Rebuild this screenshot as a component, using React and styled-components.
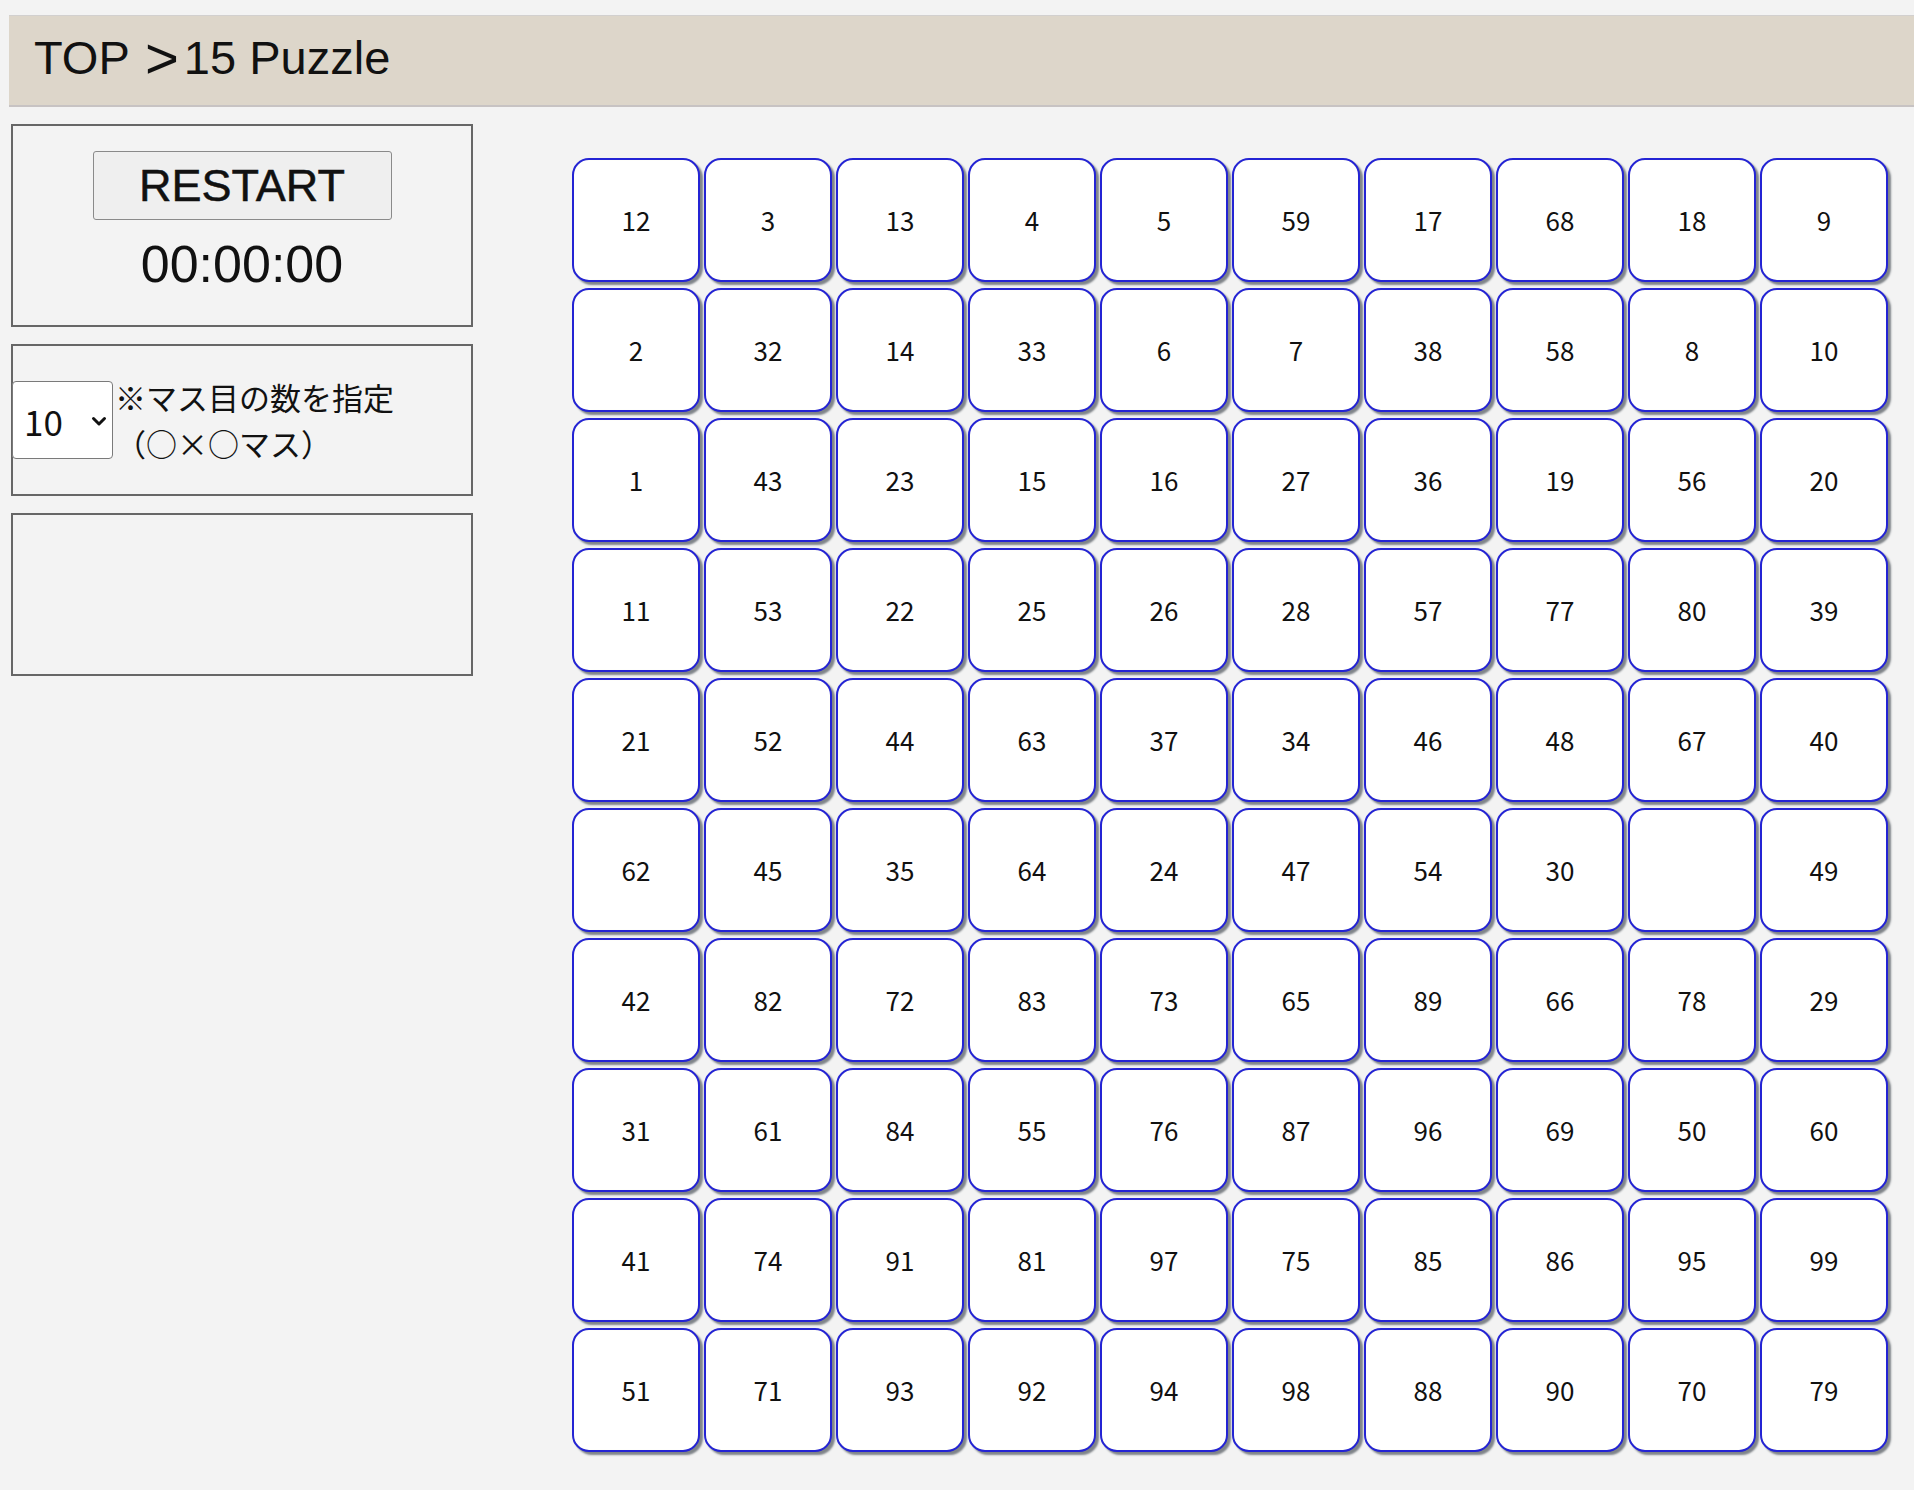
import React from "react";
import styled, { createGlobalStyle } from "styled-components";

const GlobalStyle = createGlobalStyle`
  html, body { margin: 0; padding: 0; background: #f3f3f3; }
  body { font-family: "Liberation Sans", Arial, sans-serif; color: #111; }
`;

const Page = styled.div`
  padding: 15px 0 30px 9px;
  min-height: 1490px;
  box-sizing: border-box;
`;

const Header = styled.header`
  height: 92px;
  box-sizing: border-box;
  background: #ddd6ca;
  border-top: 1px solid #d2d0cf;
  border-bottom: 2px solid #c7c3c3;
  display: flex;
  align-items: center;
  padding: 0 0 6px 25px;
  font-family: "Liberation Sans", Arial, sans-serif;
  font-size: 47px;
  color: #111;
  white-space: pre;
`;

const Arrow = styled.span`
  font-size: 58px;
  line-height: 1;
  vertical-align: -4px;
  margin: 0 5px 0 3px;
`;

const Main = styled.div`
  display: flex;
  align-items: flex-start;
  margin-top: 17px;
  margin-left: 2px;
`;

const Side = styled.div`
  width: 462px;
  display: flex;
  flex-direction: column;
  gap: 17px;
`;

const Box = styled.div`
  box-sizing: border-box;
  border: 2px solid #666;
  height: ${(p) => p.$h}px;
`;

const TimerBox = styled(Box)`
  display: flex;
  flex-direction: column;
  align-items: center;
  padding-top: 25px;
`;

const RestartButton = styled.button`
  width: 299px;
  height: 69px;
  box-sizing: border-box;
  background: #efefef;
  border: 1px solid #8a8a8a;
  border-radius: 3px;
  font-family: "Liberation Sans", Arial, sans-serif;
  font-size: 45px;
  color: #111;
  padding: 0;
  line-height: 1;
  -webkit-text-stroke: 0.5px #111;
`;

const Timer = styled.div`
  margin-top: 14px;
  font-family: "Liberation Sans", Arial, sans-serif;
  font-size: 52px;
  line-height: 60px;
  color: #111;
`;

const SizeBox = styled(Box)`
  display: flex;
  align-items: center;
`;

const SelectWrap = styled.div`
  position: relative;
  width: 101px;
  height: 78px;
  margin-left: -1px;
  flex: none;
`;

const Select = styled.select`
  appearance: none;
  -webkit-appearance: none;
  width: 100%;
  height: 100%;
  box-sizing: border-box;
  background: #fff;
  border: 1px solid #7a7a7a;
  border-radius: 4px;
  padding: 0 0 0 11px;
  font-family: "Noto Sans CJK JP", "Noto Sans", sans-serif;
  font-size: 35px;
  color: #111;
`;

const Chevron = styled.svg`
  position: absolute;
  right: 6px;
  top: 35px;
  pointer-events: none;
`;

const Label = styled.div`
  margin-left: 2px;
  font-family: "Noto Sans CJK JP", "Noto Sans", sans-serif;
  font-size: 31px;
  line-height: 46px;
  color: #111;
`;

const Board = styled.div`
  margin-left: 99px;
  margin-top: 34px;
  display: grid;
  grid-template-columns: repeat(10, 128px);
  grid-auto-rows: 124px;
  column-gap: 4px;
  row-gap: 6px;
`;

const Tile = styled.div`
  box-sizing: border-box;
  background: #fff;
  border: 2px solid #2424d4;
  border-radius: 17px;
  box-shadow: 3px 3px 2px #7f8489, inset 0 0 1px #fffbd0;
  display: flex;
  align-items: center;
  justify-content: center;
  padding-bottom: 2px;
  font-family: "Noto Sans CJK JP", "Noto Sans", sans-serif;
  font-size: 26px;
  color: #111;
`;

const numbers = [
  [12, 3, 13, 4, 5, 59, 17, 68, 18, 9],
  [2, 32, 14, 33, 6, 7, 38, 58, 8, 10],
  [1, 43, 23, 15, 16, 27, 36, 19, 56, 20],
  [11, 53, 22, 25, 26, 28, 57, 77, 80, 39],
  [21, 52, 44, 63, 37, 34, 46, 48, 67, 40],
  [62, 45, 35, 64, 24, 47, 54, 30, null, 49],
  [42, 82, 72, 83, 73, 65, 89, 66, 78, 29],
  [31, 61, 84, 55, 76, 87, 96, 69, 50, 60],
  [41, 74, 91, 81, 97, 75, 85, 86, 95, 99],
  [51, 71, 93, 92, 94, 98, 88, 90, 70, 79],
];

export default function App() {
  return (
    <Page>
      <GlobalStyle />
      <Header>
        {"TOP "}
        <Arrow>&gt;</Arrow>
        {"15 Puzzle"}
      </Header>
      <Main>
        <Side>
          <TimerBox $h={203}>
            <RestartButton>RESTART</RestartButton>
            <Timer>00:00:00</Timer>
          </TimerBox>
          <SizeBox $h={152}>
            <SelectWrap>
              <Select defaultValue="10">
                {[3, 4, 5, 6, 7, 8, 9, 10].map((n) => (
                  <option key={n} value={String(n)}>
                    {n}
                  </option>
                ))}
              </Select>
              <Chevron width="16" height="11" viewBox="0 0 16 11">
                <path d="M2.5 2.5 L8 8 L13.5 2.5" fill="none" stroke="#111" strokeWidth="3" strokeLinecap="round" strokeLinejoin="round" />
              </Chevron>
            </SelectWrap>
            <Label>
              ※マス目の数を指定
              <br />
              （○×○マス）
            </Label>
          </SizeBox>
          <Box $h={163} />
        </Side>
        <Board>
          {numbers.flat().map((n, i) => (
            <Tile key={i}>{n ?? ""}</Tile>
          ))}
        </Board>
      </Main>
    </Page>
  );
}
